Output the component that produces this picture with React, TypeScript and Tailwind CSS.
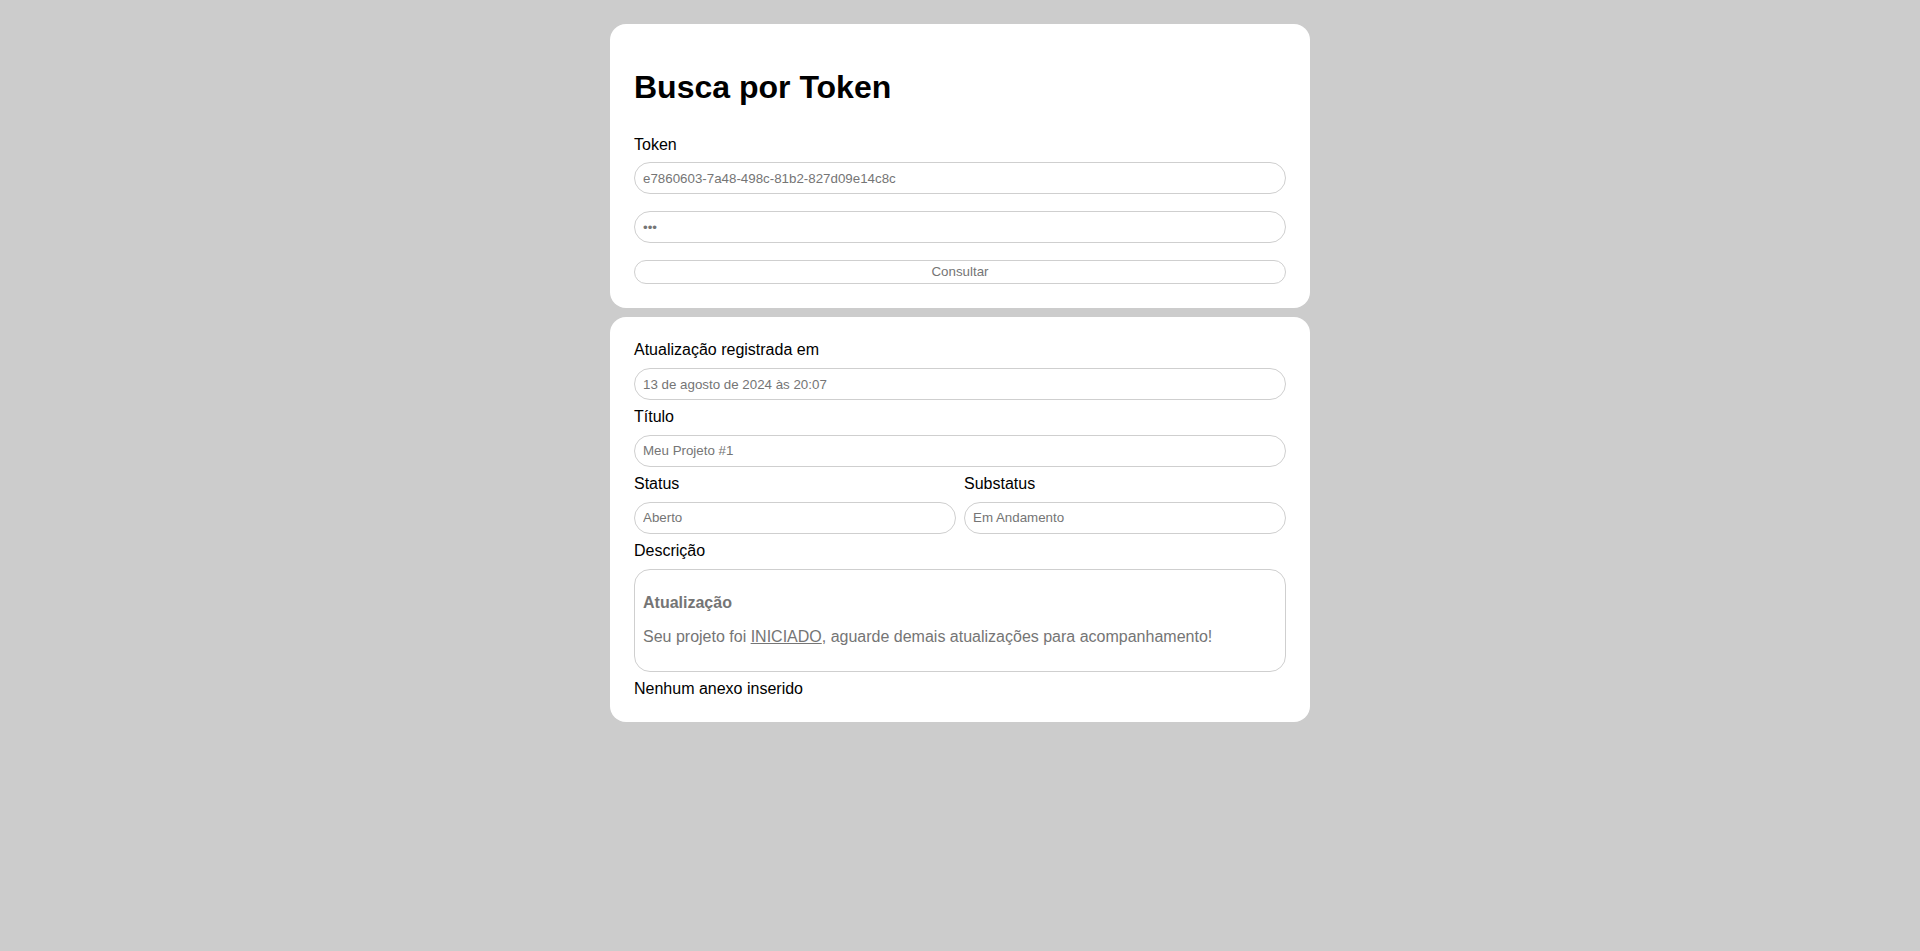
import React from "react";

const font = { fontFamily: '"Liberation Sans", Arial, sans-serif' };

function Field({ label, value }: { label: string; value: string }) {
  return (
    <div className="flex flex-col">
      <label className="block text-[16px] leading-[18.4px] text-black">{label}</label>
      <input
        readOnly
        value={value}
        className="mt-[8.5px] h-8 w-full rounded-full border border-[#cfcfcf] bg-white px-2 text-[13.33px] text-[#757575] outline-none"
      />
    </div>
  );
}

export default function App() {
  return (
    <div className="min-h-screen w-full bg-[#cccccc] pt-6" style={font}>
      <div className="mx-auto w-[700px] rounded-[16px] bg-white px-6 py-6">
        <h1 className="mt-[21.44px] mb-[29.5px] text-[32px] font-bold leading-[36.8px] text-black">
          Busca por Token
        </h1>
        <div className="flex flex-col">
          <label className="block text-[16px] leading-[18.4px] text-black">Token</label>
          <input
            readOnly
            value="e7860603-7a48-498c-81b2-827d09e14c8c"
            className="mt-2 h-8 w-full rounded-full border border-[#cfcfcf] bg-white px-2 text-[13.33px] text-[#757575] outline-none"
          />
          <input
            readOnly
            type="password"
            value="abc"
            className="mt-[17px] h-8 w-full rounded-full border border-[#cfcfcf] bg-white px-2 text-[13.33px] text-[#757575] outline-none"
          />
          <button className="mt-[17px] h-6 w-full rounded-full border border-[#cfcfcf] bg-white text-[13.33px] text-[#757575]">
            Consultar
          </button>
        </div>
      </div>

      <div className="mx-auto mt-[9px] flex w-[700px] flex-col gap-2 rounded-[16px] bg-white px-6 py-6">
        <Field label="Atualização registrada em" value="13 de agosto de 2024 às 20:07" />
        <Field label="Título" value="Meu Projeto #1" />
        <div className="grid grid-cols-2 gap-2">
          <Field label="Status" value="Aberto" />
          <Field label="Substatus" value="Em Andamento" />
        </div>
        <div className="flex flex-col">
          <label className="block text-[16px] leading-[18.4px] text-black">Descrição</label>
          <div className="mt-[8.5px] rounded-[16px] border border-[#cfcfcf] bg-white p-2 text-[16px] leading-[18.4px] text-[#757575]">
            <p className="my-4 font-bold">Atualização</p>
            <p className="my-4">
              Seu projeto foi <u>INICIADO</u>, aguarde demais atualizações para acompanhamento!
            </p>
          </div>
        </div>
        <div className="text-[16px] leading-[18.4px] text-black">Nenhum anexo inserido</div>
      </div>
    </div>
  );
}
